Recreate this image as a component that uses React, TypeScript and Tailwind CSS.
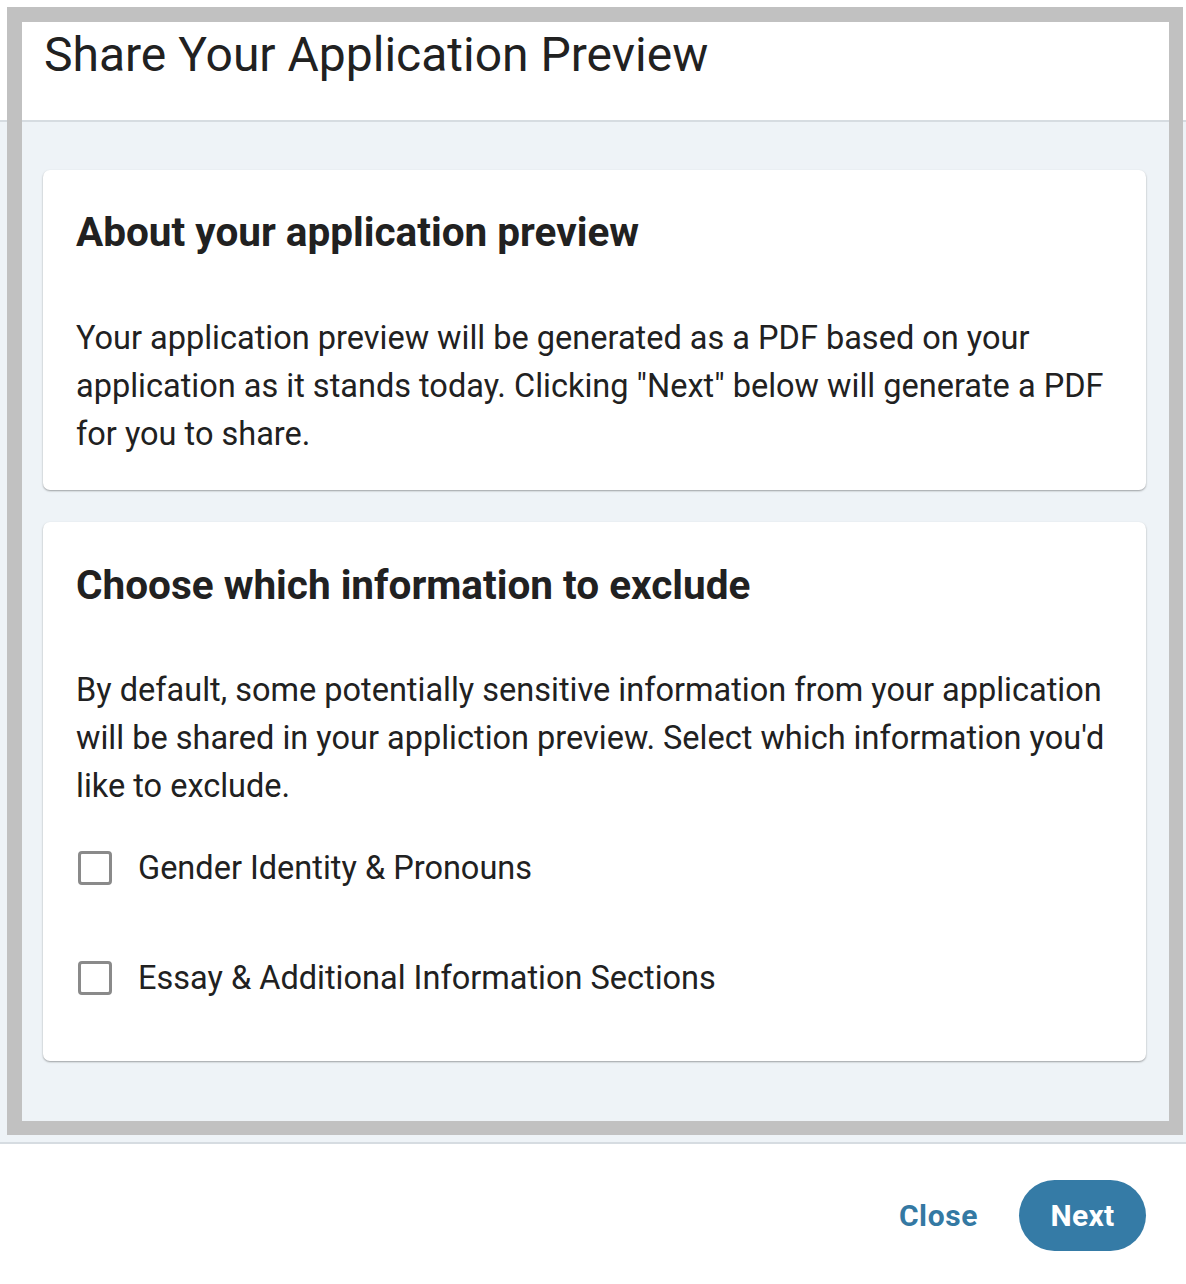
export default function App() {
  return (
    <div className="relative w-[1186px] h-[1284px] bg-white text-[#212121]" style={{ fontFamily: 'Roboto, "Liberation Sans", sans-serif' }}>
      {/* header */}
      <div className="h-[122px] border-b-2 border-[#d6dce1] bg-white px-[44px] pt-[27px]">
        <h2 className="text-[48px] leading-[56px] font-normal">Share Your Application Preview</h2>
      </div>

      {/* body */}
      <div className="h-[1020px] bg-[#eef3f7] pl-[43px] pr-[40px] pt-[48px] flex flex-col gap-[32px]">
        <section className="bg-white rounded-[7px] shadow-[0_1px_2px_rgba(0,0,0,0.35)] px-[33px] pt-[39px] pb-[32px]">
          <h3 className="text-[40.5px] leading-[46px] font-bold">About your application preview</h3>
          <p className="mt-[59px] text-[32.5px] leading-[48px]">
            Your application preview will be generated as a PDF based on your application as it stands today. Clicking "Next" below will generate a PDF for you to share.
          </p>
        </section>

        <section className="bg-white rounded-[7px] shadow-[0_1px_2px_rgba(0,0,0,0.35)] px-[33px] pt-[40px] pb-[59px]">
          <h3 className="text-[40.5px] leading-[46px] font-bold">Choose which information to exclude</h3>
          <p className="mt-[58px] text-[32.5px] leading-[48px]">
            By default, some potentially sensitive information from your application will be shared in your appliction preview. Select which information you'd like to exclude.
          </p>
          <div className="mt-[34px] flex flex-col gap-[62px]">
            {['Gender Identity & Pronouns', 'Essay & Additional Information Sections'].map((label) => (
              <label key={label} className="flex items-center h-[48px] gap-[26px] pl-[2px]">
                <span className="w-[34px] h-[34px] rounded-[4px] border-[3px] border-[#8a8a8a] bg-white shrink-0" />
                <span className="text-[32.5px] leading-[48px]">{label}</span>
              </label>
            ))}
          </div>
        </section>
      </div>

      {/* footer */}
      <div className="border-t-2 border-[#d6dce1] h-[142px] flex items-start justify-end pr-[40px] pt-[36px] gap-[41px]">
        <button className="h-[71px] text-[30px] tracking-[0.6px] font-bold text-[#3479a3]">Close</button>
        <button className="h-[71px] w-[127px] rounded-full bg-[#357ba6] text-white text-[30px] tracking-[0.3px] font-bold">Next</button>
      </div>

      {/* highlight frame */}
      <div className="absolute left-[7px] top-[7px] w-[1176px] h-[1128px] border-[14px] border-t-[15px] border-l-[15px] border-[#c1c1c1] pointer-events-none" />
    </div>
  )
}
